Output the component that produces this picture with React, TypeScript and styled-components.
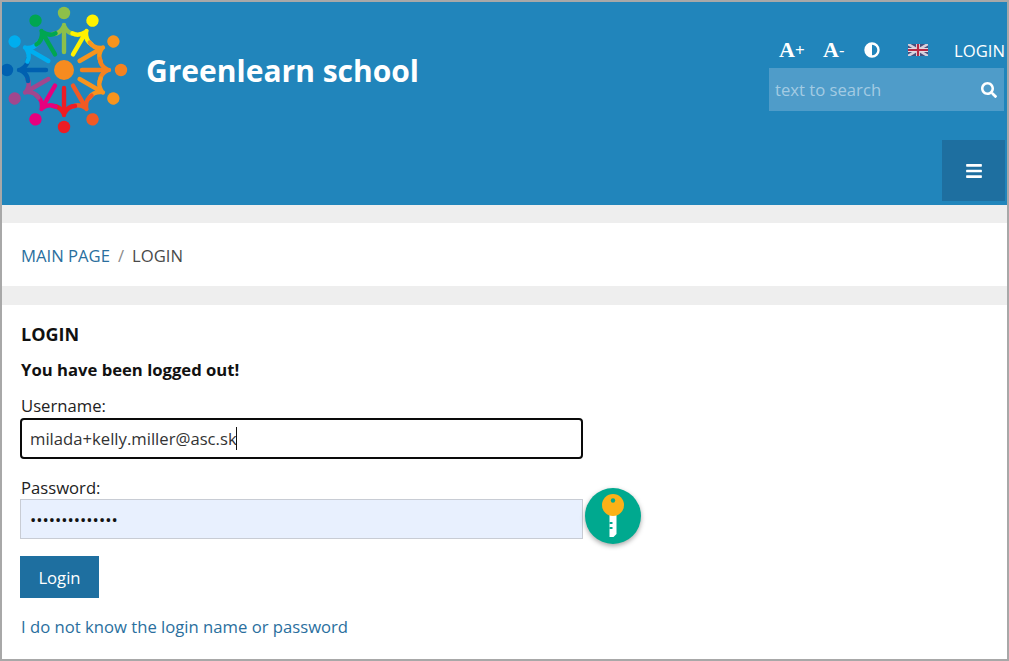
import { createGlobalStyle } from "styled-components";
import styled from "styled-components";
import { FaBars, FaSearch } from "react-icons/fa";

const GlobalStyle = createGlobalStyle`
  html, body {
    margin: 0;
    padding: 0;
    background: #fff;
    font-family: "Open Sans", "Liberation Sans", sans-serif;
    overflow: hidden;
  }
  * {
    box-sizing: border-box;
  }
`;

const Frame = styled.div`
  width: 1009px;
  height: 661px;
  border: 2px solid #a8a8a8;
  background: #fff;
  overflow: hidden;
`;
const Header = styled.header`
  height: 203px;
  background: #2185bb;
  display: flex;
  justify-content: space-between;
`;
const Brand = styled.div`
  display: flex;
  align-items: flex-start;
`;
const Logo = styled.svg`
  width: 130px;
  height: 135px;
  display: block;
  flex: none;
  filter: blur(0.4px);
`;
const Title = styled.h1`
  margin: 49px 0 0 14px;
  font-size: 30px;
  line-height: 40px;
  font-weight: 700;
  color: #fff;
`;
const Side = styled.div`
  width: 238px;
  margin-right: 2px;
  display: flex;
  flex-direction: column;
  align-items: flex-end;
`;
const Tools = styled.div`
  width: 100%;
  height: 66px;
  padding: 30px 0 0 12px;
  display: flex;
  align-items: center;
  white-space: nowrap;
  color: #fff;
`;
const FontTool = styled.span`
  width: 45px;
  font-family: "Liberation Serif", serif;
  font-weight: 700;
  font-size: 22px;
  line-height: 24px;
  sup {
    font-family: "Open Sans", sans-serif;
    font-weight: 400;
    font-size: 17px;
    line-height: 14px;
    vertical-align: 1px;
  }
`;
const Contrast = styled.svg`
  width: 16px;
  height: 16px;
  margin-left: -3px;
  flex: none;
`;
const Flag = styled.svg`
  width: 20px;
  height: 12px;
  margin-left: 28px;
  flex: none;
  filter: blur(0.5px);
`;
const LoginLink = styled.a`
  margin-left: 26px;
  font-size: 16.67px;
  color: #fff;
`;
const Search = styled.div`
  width: 235px;
  height: 43px;
  margin-right: 1px;
  padding: 0 7px 0 6px;
  background: #4f9cc9;
  display: flex;
  align-items: center;
  justify-content: space-between;
  font-size: 16.67px;
  color: #a3cbe3;
  svg {
    color: #fff;
    width: 16px;
    height: 16px;
  }
`;
const MenuButton = styled.button`
  width: 63px;
  height: 61px;
  margin: 29px 0 0 0;
  border: 0;
  padding: 0;
  background: #1e6fa0;
  color: #fff;
  display: flex;
  align-items: center;
  justify-content: center;
  svg {
    width: 16px;
    height: 18px;
  }
`;
const Strip = styled.div`
  background: #eeeeee;
  height: ${(props: { $h: number }) => props.$h}px;
`;
const Crumbs = styled.nav`
  height: 63px;
  padding: 2px 19px 0;
  display: flex;
  align-items: center;
  font-size: 16.67px;
  color: #4a4a4a;
  a {
    color: #2a6f9e;
  }
  i {
    font-style: normal;
    color: #8a8a8a;
    margin: 0 8px;
  }
`;
const Content = styled.main`
  padding: 17px 18px 0;
  color: #111;
`;
const Heading = styled.h2`
  margin: 0;
  padding-left: 1px;
  font-size: 18px;
  line-height: 24px;
  font-weight: 700;
  color: #111;
`;
const Notice = styled.p`
  margin: 12px 0 0;
  padding-left: 1px;
  font-size: 16.67px;
  line-height: 24px;
  font-weight: 700;
`;
const Label = styled.label`
  display: block;
  padding-left: 1px;
  font-size: 16.67px;
  line-height: 22px;
  color: #222;
`;
const UserLabel = styled(Label)`
  margin-top: 13px;
`;
const PassLabel = styled(Label)`
  margin-top: 18px;
`;
const UserBox = styled.div`
  width: 563px;
  height: 41px;
  margin-top: 1px;
  padding: 0 8px;
  border: 2px solid #0a0a0a;
  border-radius: 4px;
  display: flex;
  align-items: center;
  font-size: 16.67px;
  color: #333;
`;
const Caret = styled.span`
  width: 1px;
  height: 23px;
  background: #111;
  margin-left: -1px;
`;
const PassRow = styled.div`
  position: relative;
  width: 563px;
`;
const PassInput = styled.input`
  display: block;
  width: 563px;
  height: 40px;
  padding: 0 9px;
  border: 1px solid #c8ccd4;
  background: #e8f0fe;
  color: #111;
  font-family: "Open Sans", sans-serif;
  font-size: 16.67px;
  outline: none;
`;
const KeyBadge = styled.div`
  position: absolute;
  left: 565px;
  top: -11px;
  width: 56px;
  height: 56px;
  border-radius: 50%;
  background: #00a98f;
  box-shadow: 0 2px 5px rgba(0, 0, 0, 0.35);
  display: flex;
  align-items: center;
  justify-content: center;
`;
const Submit = styled.button`
  display: block;
  width: 79px;
  height: 42px;
  margin-top: 17px;
  border: 0;
  background: #1e6fa0;
  color: #fff;
  font-family: "Open Sans", sans-serif;
  font-size: 16.67px;
`;
const Forgot = styled.a`
  display: block;
  margin-top: 17px;
  padding-left: 1px;
  font-size: 16.67px;
  line-height: 24px;
  color: #2a6f9e;
`;

const people = [
  "#8dc04a",
  "#fff200",
  "#f7941d",
  "#f58220",
  "#f7941d",
  "#f15a24",
  "#ed1c24",
  "#e6007e",
  "#a1478e",
  "#0060b0",
  "#00aeef",
  "#00a651",
];

function LogoMark() {
  return (
    <Logo viewBox="0 0 130 135">
      <circle cx="62" cy="68" r="10" fill="#f68b1f" />
      {people.map((color, i) => (
        <g key={i} transform={`rotate(${i * 30} 62 68)`}>
          <circle cx="62" cy="11" r="6.2" fill={color} />
          <path
            d="M62 50V23M51 32Q58 32 62 24Q66 32 73 32"
            fill="none"
            stroke={color}
            strokeWidth="4.4"
            strokeLinecap="round"
            strokeLinejoin="round"
          />
        </g>
      ))}
    </Logo>
  );
}

function App() {
  return (
    <>
      <GlobalStyle />
      <Frame>
        <Header>
          <Brand>
            <LogoMark />
            <Title>Greenlearn school</Title>
          </Brand>
          <Side>
            <Tools>
              <FontTool>
                A<sup>+</sup>
              </FontTool>
              <FontTool>
                A<sup>-</sup>
              </FontTool>
              <Contrast viewBox="0 0 16 16">
                <circle cx="8" cy="8" r="6.5" fill="none" stroke="#fff" strokeWidth="2.4" />
                <path d="M8 2a6 6 0 0 0 0 12z" fill="#fff" />
              </Contrast>
              <Flag viewBox="0 0 20 12">
                <rect width="20" height="12" fill="#46507f" />
                <path d="M0 0L20 12M20 0L0 12" stroke="#d8d0dc" strokeWidth="2.6" />
                <path d="M10 0V12M0 6H20" stroke="#e0dbe2" strokeWidth="4" />
                <path d="M10 0V12M0 6H20" stroke="#b52a45" strokeWidth="2.2" />
              </Flag>
              <LoginLink>LOGIN</LoginLink>
            </Tools>
            <Search>
              <span>text to search</span>
              <FaSearch />
            </Search>
            <MenuButton aria-label="menu">
              <FaBars />
            </MenuButton>
          </Side>
        </Header>
        <Strip $h={18} />
        <Crumbs>
          <a>MAIN PAGE</a>
          <i>/</i>
          <span>LOGIN</span>
        </Crumbs>
        <Strip $h={19} />
        <Content>
          <Heading>LOGIN</Heading>
          <Notice>You have been logged out!</Notice>
          <UserLabel>Username:</UserLabel>
          <UserBox>
            milada+kelly.miller@asc.sk
            <Caret />
          </UserBox>
          <PassLabel>Password:</PassLabel>
          <PassRow>
            <PassInput type="password" defaultValue="aaaaaaaaaaaaaa" />
            <KeyBadge>
              <svg width="24" height="44" viewBox="0 0 24 44">
                <path d="M8.5 16h7v24l-3 3h-4z" fill="#fff" />
                <path d="M8.5 28h3v2h-3zM8.5 33h3v2h-3z" fill="#00a98f" />
                <circle cx="12" cy="11" r="11" fill="#fbb117" />
                <circle cx="12" cy="6.5" r="2.2" fill="#00a98f" />
              </svg>
            </KeyBadge>
          </PassRow>
          <Submit>Login</Submit>
          <Forgot>I do not know the login name or password</Forgot>
        </Content>
      </Frame>
    </>
  );
}

export default App;
